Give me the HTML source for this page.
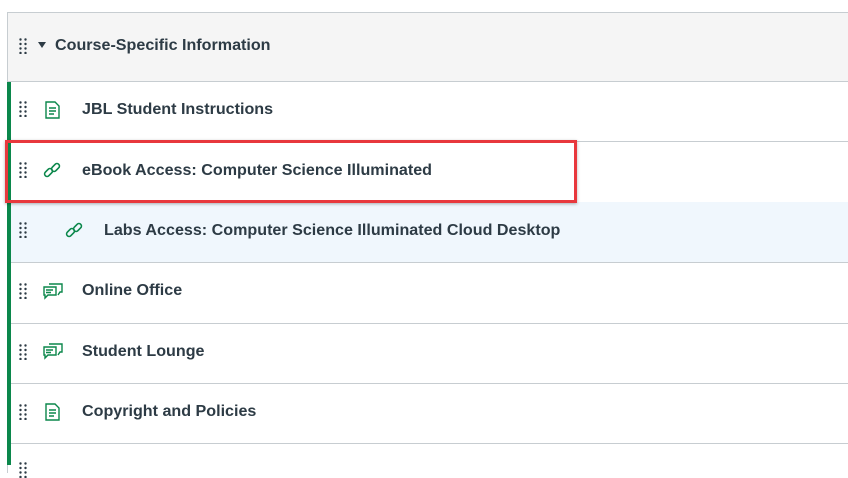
<!DOCTYPE html><html><head><style>
body{margin:0;width:848px;height:465px;overflow:hidden;background:#fff;font-family:"Liberation Sans",sans-serif;position:relative}
.box{position:absolute;left:7px;top:12px;width:850px;height:460px;border-left:1px solid #c7cdd1;border-top:1px solid #c7cdd1}
.hdr{position:absolute;left:8px;top:13px;width:840px;height:68px;background:#f5f5f5;border-bottom:1px solid #c7cdd1}
.bar{position:absolute;left:7px;top:82px;width:4px;height:383px;background:#0b874b}
.row{position:absolute;left:11px;width:837px;height:60px;border-bottom:1px solid #c7cdd1}
.t{position:absolute;font-size:16.1px;font-weight:bold;color:#2d3b45;white-space:nowrap}
.dh{position:absolute;width:8px;height:16px}
.ic{position:absolute}
.red{position:absolute;left:5px;top:140px;width:566px;height:57px;border:3px solid #e8383d;box-shadow:0 1px 3px rgba(0,0,0,.3)}
</style></head><body>
<div class="box"></div>
<div class="hdr"></div>
<div class="bar"></div>
<svg width="0" height="0" style="position:absolute"><defs>
<g id="d" fill="#2d3b45"><circle cx="1.5" cy="1.5" r="1.2"/><circle cx="6.5" cy="1.5" r="1.2"/><circle cx="1.5" cy="6" r="1.2"/><circle cx="6.5" cy="6" r="1.2"/><circle cx="1.5" cy="10.5" r="1.2"/><circle cx="6.5" cy="10.5" r="1.2"/><circle cx="1.5" cy="15" r="1.2"/><circle cx="6.5" cy="15" r="1.2"/></g>
<g id="p" fill="none" stroke="#0b874b" stroke-width="1.4"><path d="M1 1h9l4 4v12H1z"/><path d="M4 7h7M4 10h7M4 13h5"/></g>
<g id="l" fill="none" stroke="#0b874b" stroke-width="1.6"><rect x="1" y="8" width="9" height="5" rx="2.5" transform="rotate(-45 5.5 10.5)"/><rect x="8" y="3" width="9" height="5" rx="2.5" transform="rotate(-45 12.5 5.5)"/></g>
<g id="c" fill="none" stroke="#0b874b" stroke-width="1.4"><path d="M1 4h12v8H5l-3 3v-3H1z"/><path d="M6 1h13v8h-2l-2 3"/><path d="M3 7h7M3 9.5h5"/></g>
</defs></svg>
<svg class="dh" style="left:19px;top:38px" height="17"><use href="#d"/></svg>
<div style="position:absolute;left:38px;top:42px;width:0;height:0;border-left:4px solid transparent;border-right:4px solid transparent;border-top:6px solid #2d3b45"></div>
<div class="t" style="left:55px;top:36px">Course-Specific Information</div>

<div class="row" style="top:81px"></div>
<svg class="dh" style="left:19px;top:101px" height="17"><use href="#d"/></svg>
<svg class="ic" style="left:45px;top:101px" width="16" height="19"><use href="#p"/></svg>
<div class="t" style="left:82px;top:100px">JBL Student Instructions</div>

<div class="row" style="top:142px"></div>
<svg class="dh" style="left:19px;top:162px" height="17"><use href="#d"/></svg>
<svg class="ic" style="left:43px;top:162px" width="20" height="20"><use href="#l"/></svg>
<div class="t" style="left:82px;top:161px">eBook Access: Computer Science Illuminated</div>

<div class="row" style="top:202px;background:#f0f7fd"></div>
<svg class="dh" style="left:19px;top:222px" height="17"><use href="#d"/></svg>
<svg class="ic" style="left:65px;top:222px" width="20" height="20"><use href="#l"/></svg>
<div class="t" style="left:104px;top:221px">Labs Access: Computer Science Illuminated Cloud Desktop</div>

<div class="row" style="top:263px"></div>
<svg class="dh" style="left:19px;top:283px" height="17"><use href="#d"/></svg>
<svg class="ic" style="left:43px;top:283px" width="21" height="18"><use href="#c"/></svg>
<div class="t" style="left:82px;top:281px">Online Office</div>

<div class="row" style="top:323px"></div>
<svg class="dh" style="left:19px;top:344px" height="17"><use href="#d"/></svg>
<svg class="ic" style="left:43px;top:343px" width="21" height="18"><use href="#c"/></svg>
<div class="t" style="left:82px;top:342px">Student Lounge</div>

<div class="row" style="top:383px"></div>
<svg class="dh" style="left:19px;top:404px" height="17"><use href="#d"/></svg>
<svg class="ic" style="left:45px;top:403px" width="16" height="19"><use href="#p"/></svg>
<div class="t" style="left:82px;top:402px">Copyright and Policies</div>

<svg class="dh" style="left:19px;top:462px" height="17"><use href="#d"/></svg>
<div class="red"></div>
</body></html>
